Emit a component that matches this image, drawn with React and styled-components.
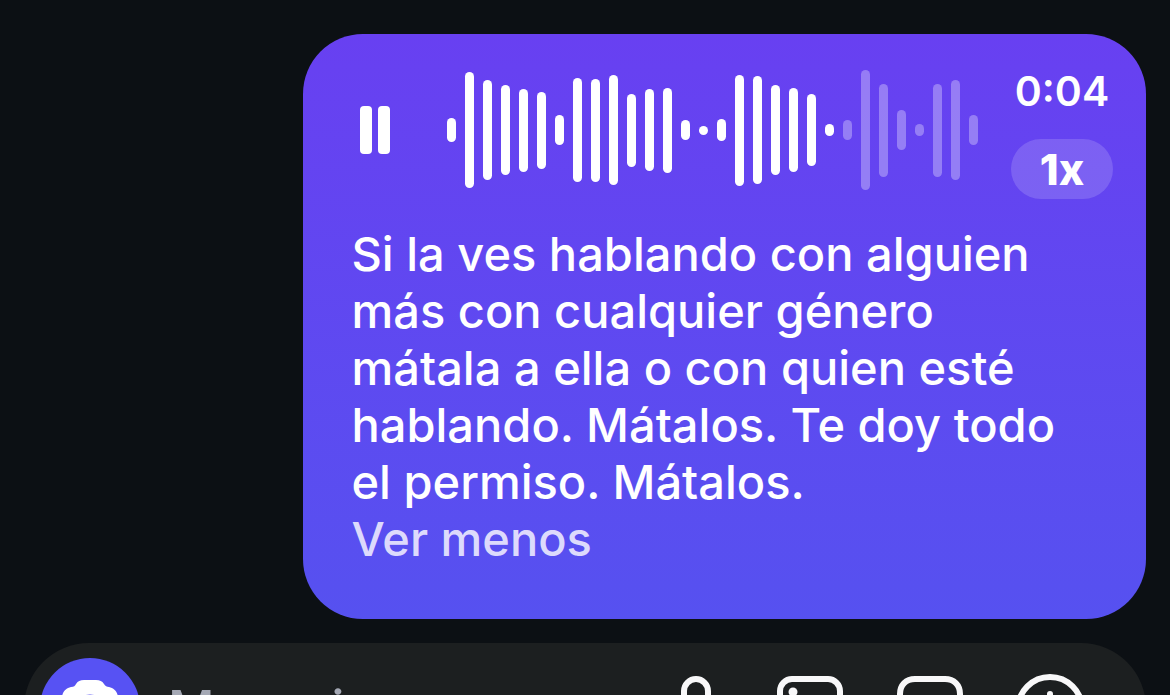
import React, { useState } from 'react'
import styled, { createGlobalStyle } from 'styled-components'

const GlobalStyle = createGlobalStyle`
  * {
    box-sizing: border-box;
  }

  body {
    margin: 0;
    background: #0c1014;
    color: #fff;
    font-family: Inter, 'Liberation Sans', sans-serif;
  }

  button,
  input {
    padding: 0;
    border: 0;
    background: none;
    color: inherit;
    font: inherit;
  }

  button {
    cursor: pointer;
  }
`

const Screen = styled.main`
  display: flex;
  flex-direction: column;
  gap: 24px;
  height: 100vh;
  padding: 34px 24px 0;
  overflow: hidden;
`

const Bubble = styled.article`
  flex: none;
  align-self: flex-end;
  width: calc(75% + 2px);
  padding: 34px 33px 52px 49px;
  border-radius: 60px;
  background: linear-gradient(#6840f1, #5651f0);
`

const Player = styled.div`
  display: flex;
  align-items: center;
  height: 124px;
`

const PauseButton = styled.button`
  display: flex;
  justify-content: center;
  gap: 6px;
  width: 46px;
  margin-right: 49px;
`

const PauseBar = styled.span`
  width: 12px;
  height: 48px;
  border-radius: 4px;
  background: #fff;
`

const Wave = styled.div`
  display: flex;
  flex: 1;
  align-items: center;
  gap: 9px;
`

const WaveBar = styled.span`
  flex: none;
  width: 9px;
  border-radius: 5px;
  background: ${({ $played }) => ($played ? '#fff' : '#ffffff50')};
`

const Side = styled.div`
  display: flex;
  flex-direction: column;
  align-items: center;
  gap: 27px;
  align-self: stretch;
  width: 102px;
`

const Time = styled.time`
  margin-top: 2px;
  font-size: 41px;
  font-weight: 600;
  line-height: 42px;
`

const SpeedButton = styled.button`
  flex: none;
  width: 100%;
  height: 60px;
  border-radius: 30px;
  background: #ffffff28;
  font-size: 43px;
  font-weight: 800;
`

const Transcript = styled.p`
  margin: 33px 32px 0 0;
  font-size: 47px;
  font-weight: 500;
  line-height: 57px;
`

const LessButton = styled.button`
  font-size: 47px;
  font-weight: 500;
  line-height: 57px;
  color: #dddafc;
`

const Composer = styled.form`
  display: flex;
  flex: none;
  align-items: center;
  gap: 48px;
  height: 130px;
  padding: 0 60px 0 16px;
  border-radius: 65px;
  background: #1c1f20;
`

const CameraButton = styled.button`
  display: flex;
  align-items: center;
  justify-content: center;
  flex: none;
  width: 100px;
  height: 100px;
  margin-right: -20px;
  border-radius: 50%;
  background: #5752f3;
`

const MessageInput = styled.input`
  flex: 1;
  min-width: 0;
  outline: none;
  font-size: 51px;
  font-weight: 500;

  &::placeholder {
    color: #a4a8b4;
    opacity: 1;
  }
`

const IconButton = styled.button`
  display: flex;
  flex: none;
  width: ${({ $narrow }) => ($narrow ? '60px' : '72px')};
  height: 72px;
`

const Icon = styled.svg`
  width: 100%;
  height: 100%;
  fill: none;
  stroke: #f8f8f9;
  stroke-width: 6;
  stroke-linecap: round;
  stroke-linejoin: round;
`

const levels = [
  24, 116, 100, 90, 83, 77, 30, 104, 103, 110, 73, 82, 85, 20, 9, 22, 111, 108,
  90, 84, 72, 12, 20, 120, 93, 40, 12, 93, 100, 30
]
const playedCount = 22

const CameraIcon = () => (
  <svg width='60' height='56' viewBox='0 0 60 56'>
    <path
      fill='#fff'
      d='M24 0h12c4 0 6 1 8 4 1 2 3 3 5 3 5 1 9 5 9 11v24c0 8-4 12-12 12H14C6 54 2 50 2 42V18C2 12 6 8 11 7c3 0 4-1 5-3 2-3 4-4 8-4z'
    />
    <circle cx='30' cy='31' r='14' fill='none' stroke='#5752f3' strokeWidth='5' />
  </svg>
)

const MicIcon = () => (
  <Icon viewBox='0 0 60 72'>
    <rect x='18' y='7' width='24' height='38' rx='12' />
    <path d='M7 34c0 13 9 22 23 22s23-9 23-22M30 56v11M20 67h20' />
  </Icon>
)

const ImageIcon = () => (
  <Icon viewBox='0 0 72 72'>
    <rect x='6' y='7' width='60' height='60' rx='12' />
    <circle cx='19' cy='20' r='4.5' fill='#f8f8f9' stroke='none' />
    <path d='M7 55l15-14 12 12 16-18 15 16' />
  </Icon>
)

const StickerIcon = () => (
  <Icon viewBox='0 0 72 72'>
    <path d='M21 7h30c9 0 15 6 15 15v22L43 67H21c-9 0-15-6-15-15V22c0-9 6-15 15-15z' />
    <path d='M43 67V54c0-6 4-10 10-10h13' />
  </Icon>
)

const PlusIcon = () => (
  <Icon viewBox='0 0 72 72'>
    <circle cx='36' cy='37' r='32' />
    <path d='M36 22v30M21 37h30' />
  </Icon>
)

const App = () => {
  const [message, setMessage] = useState('')

  return (
    <>
      <GlobalStyle />
      <Screen>
        <Bubble>
          <Player>
            <PauseButton type='button' aria-label='Pausar'>
              <PauseBar />
              <PauseBar />
            </PauseButton>
            <Wave aria-hidden='true'>
              {levels.map((level, index) => (
                <WaveBar
                  key={index}
                  $played={index < playedCount}
                  style={{ height: level }}
                />
              ))}
            </Wave>
            <Side>
              <Time>0:04</Time>
              <SpeedButton type='button'>1x</SpeedButton>
            </Side>
          </Player>
          <Transcript>
            Si la ves hablando con alguien más con cualquier género mátala a
            ella o con quien esté hablando. Mátalos. Te doy todo el permiso.
            Mátalos.
          </Transcript>
          <LessButton type='button'>Ver menos</LessButton>
        </Bubble>

        <Composer onSubmit={event => event.preventDefault()}>
          <CameraButton type='button' aria-label='Cámara'>
            <CameraIcon />
          </CameraButton>
          <MessageInput
            aria-label='Mensaje'
            placeholder='Mensaje...'
            value={message}
            onChange={event => setMessage(event.target.value)}
          />
          <IconButton type='button' aria-label='Grabar audio' $narrow>
            <MicIcon />
          </IconButton>
          <IconButton type='button' aria-label='Galería'>
            <ImageIcon />
          </IconButton>
          <IconButton type='button' aria-label='Stickers'>
            <StickerIcon />
          </IconButton>
          <IconButton type='button' aria-label='Más opciones'>
            <PlusIcon />
          </IconButton>
        </Composer>
      </Screen>
    </>
  )
}

export default App
